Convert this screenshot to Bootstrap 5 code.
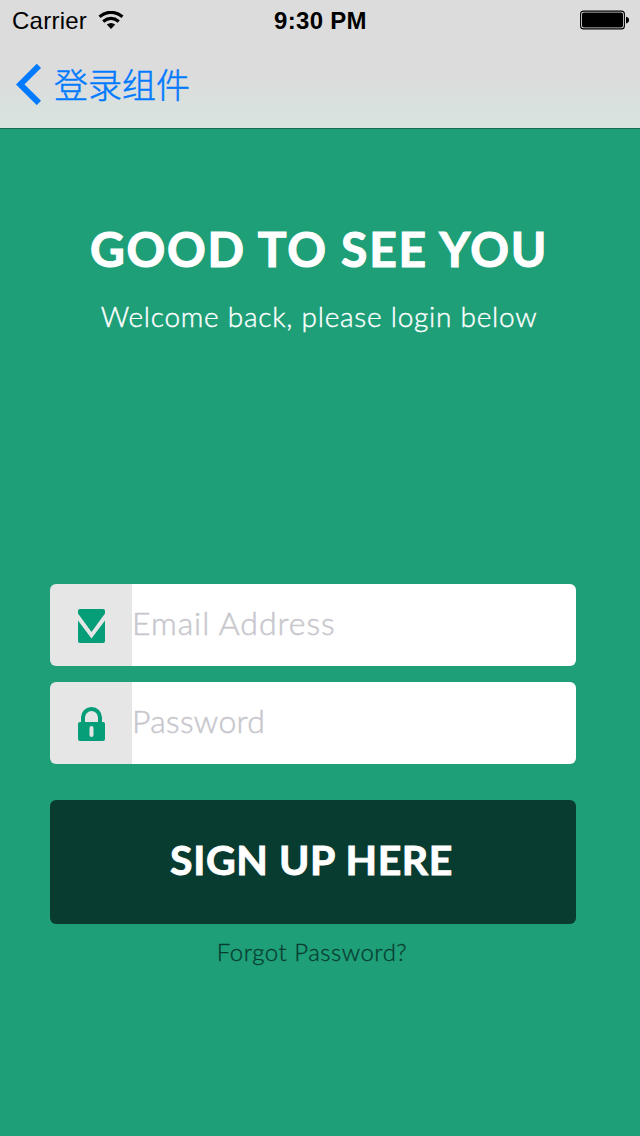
<!DOCTYPE html>
<html lang="zh-CN">
<head>
<meta charset="utf-8">
<meta name="viewport" content="width=device-width, initial-scale=1">
<title>登录组件</title>
<link href="https://cdn.jsdelivr.net/npm/bootstrap@5.3.0/dist/css/bootstrap.min.css" rel="stylesheet">
<style>
  body { background: #1e9f78; font-family: Lato, "Noto Sans", sans-serif; min-height: 1136px; overflow: hidden; }
  .top-bar { height: 129px; background: linear-gradient(#dcdcdc 0, #dcdcdc 78px, #d9e0dd 100px, #d8e4e0 128px); border-bottom: 1px solid #17694f; }
  .status-row { height: 40px; padding: 1px 11px 0 12px; color: #000; font: 24px/40px "Liberation Sans", Arial, sans-serif; display: grid; grid-template-columns: 1fr auto 1fr; }
  .carrier { letter-spacing: .25px; }
  .wifi { margin: 0 0 2px 3px; }
  .battery { margin-bottom: 2px; }
  .clock { font-weight: 700; font-size: 24px; letter-spacing: .3px; }
  .back-link { height: 88px; padding-left: 16px; gap: 12px; color: #007aff; font: 300 34px/86px "Noto Sans CJK SC", sans-serif; }
  .back-link span { -webkit-text-stroke: .5px #007aff; margin-top: -1px; }
  .login-panel { padding: 91px 64px 0 50px; }
  .headline { font-size: 48px; font-weight: 700; line-height: 58px; letter-spacing: 1.75px; margin: 0 -6px 0 6px; white-space: nowrap; -webkit-text-stroke: 1.1px #fff; }
  .welcome { font-size: 28px; font-weight: 300; line-height: 36px; letter-spacing: .75px; margin: 20px -6px 0 6px; white-space: nowrap; -webkit-text-stroke: .4px #fff; }
  .fields { margin-top: 250px; gap: 16px; }
  .field-box { height: 82px; border-radius: 6px; }
  .field-icon { width: 83px; padding: 1px 1px 0 0; background: #e6e6e6; border: 0; border-radius: 6px 0 0 6px; }
  .field-box .form-control { border: 0; border-radius: 0 6px 6px 0; padding: 0 0 4px; font-size: 32px; font-weight: 300; }
  .field-box .form-control::placeholder { color: #c7c7cd; opacity: 1; -webkit-text-stroke: .5px #c7c7cd; }
  .email-input { letter-spacing: .95px; }
  .password-input { letter-spacing: .3px; }
  .signup { height: 124px; margin-top: 36px; border: 0; border-radius: 6px; background: #083c30; color: #fff; font-size: 41px; font-weight: 700; letter-spacing: .6px; padding: 0 3px 5px 0; -webkit-text-stroke: .9px #fff; }
  .forgot { color: #083c30; font-size: 24px; font-weight: 300; line-height: 30px; letter-spacing: .5px; margin: 13px 2px 0 0; -webkit-text-stroke: .3px #083c30; }
</style>
</head>
<body>
<header class="top-bar">
  <div class="status-row">
    <div class="d-flex align-items-center"><span class="carrier me-2">Carrier</span>
      <svg class="wifi" width="26" height="18" viewBox="0 0 26 18"><g fill="none" stroke="#000" stroke-width="3.2"><path d="M1.5 5.8Q13-3.2 24.5 5.8"/><path d="M5.2 10.4Q13 4.2 20.8 10.4"/></g><path d="M8.8 13.6Q13 10.2 17.2 13.6L13 18Z"/></svg>
    </div>
    <div class="clock">9:30 PM</div>
    <div class="d-flex align-items-center justify-content-end">
      <svg class="battery" width="49" height="20" viewBox="0 0 49 20"><rect x=".6" y="1.1" width="43.8" height="17.8" rx="3" fill="none" stroke="#000" stroke-width="1.1"/><rect x="2" y="2.4" width="41" height="15.2" rx="2"/><path d="M46 6.8Q49 7.3 49 10T46 13.4Z"/></svg>
    </div>
  </div>
  <a href="#" class="back-link d-flex align-items-center text-decoration-none">
    <svg width="26" height="42" viewBox="0 0 26 42"><path d="M22.9 2.8L4.2 21.5 22.9 40" fill="none" stroke="#007aff" stroke-width="6"/></svg>
    <span>登录组件</span>
  </a>
</header>
<main class="login-panel text-center text-white">
  <h1 class="headline">GOOD TO SEE YOU</h1>
  <p class="welcome mb-0">Welcome back, please login below</p>
  <form>
    <div class="fields d-flex flex-column">
      <div class="input-group field-box">
        <span class="input-group-text field-icon justify-content-center">
          <svg width="27" height="34" viewBox="0 0 27 34" fill="#059e79"><path d="M2 0H25Q27 0 27 2V4.5L13.5 23 0 4.5V2Q0 0 2 0Z"/><path d="M0 11.5L13.5 29.5 27 11.5V32Q27 34 25 34H2Q0 34 0 32Z"/></svg>
        </span>
        <input type="email" class="form-control email-input" placeholder="Email Address">
      </div>
      <div class="input-group field-box">
        <span class="input-group-text field-icon justify-content-center">
          <svg width="27" height="34" viewBox="0 0 27 34"><path d="M5 17V10.5a8.5 8.5 0 0 1 17 0V17" fill="none" stroke="#059e79" stroke-width="4"/><rect y="15" width="27" height="19" rx="2" fill="#059e79"/><rect x="11.5" y="19" width="4" height="11" rx="2" fill="#e6e6e6"/></svg>
        </span>
        <input type="password" class="form-control password-input" placeholder="Password">
      </div>
    </div>
    <button type="button" class="btn signup w-100 d-block">SIGN UP HERE</button>
  </form>
  <a href="#" class="forgot d-block text-decoration-none">Forgot Password?</a>
</main>
<script src="https://cdn.jsdelivr.net/npm/bootstrap@5.3.0/dist/js/bootstrap.bundle.min.js"></script>
</body>
</html>
